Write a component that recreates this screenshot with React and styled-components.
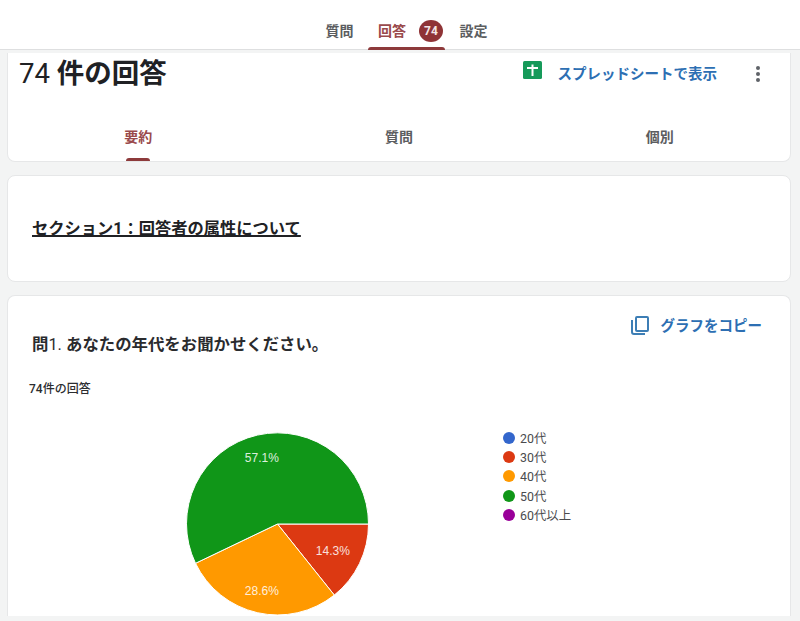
import React from 'react';
import styled, { createGlobalStyle } from 'styled-components';

const fontStack = '"Roboto", "Noto Sans CJK JP", "Liberation Sans", sans-serif';

const GlobalStyle = createGlobalStyle`
  html, body {
    margin: 0;
    padding: 0;
    background: #f3f4f4;
    font-family: ${fontStack};
  }
`;

const Page = styled.div`
  width: 800px;
  height: 621px;
  overflow: hidden;
  display: flex;
  flex-direction: column;
`;

const TopBar = styled.header`
  flex: none;
  height: 50px;
  box-sizing: border-box;
  background: #fff;
  border-bottom: 1px solid #dedfe0;
  display: flex;
  justify-content: center;
  padding-left: 13px;
  gap: 14.5px;
`;

const TopTab = styled.div`
  position: relative;
  display: flex;
  align-items: center;
  gap: 13px;
  height: 50px;
  padding: 9px ${(p) => (p.$active ? '2px' : '0')} 0 ${(p) => (p.$active ? '10px' : '0')};
  box-sizing: border-box;
  font-size: 14px;
  font-weight: 700;
  color: ${(p) => (p.$active ? '#9a4a4c' : '#5b5d60')};
`;

const TopUnderline = styled.span`
  position: absolute;
  left: 0;
  right: 0;
  bottom: 0;
  height: 3px;
  border-radius: 3px 3px 0 0;
  background: #8d3a3b;
`;

const Badge = styled.span`
  width: 24px;
  height: 22px;
  margin-top: 3px;
  border-radius: 50%;
  background: #8f3336;
  color: #f4e6e6;
  font-size: 12px;
  font-weight: 700;
  display: flex;
  align-items: center;
  justify-content: center;
`;

const Content = styled.main`
  flex: 1;
  min-height: 0;
  display: flex;
  flex-direction: column;
  padding: 0 9px 0 7px;
  gap: 13px;
`;

const Card = styled.section`
  flex: none;
  background: #fff;
  border: 1px solid #e6e7e8;
  border-radius: 8px;
  box-sizing: border-box;
`;

const SummaryCard = styled(Card)`
  height: 109px;
  margin-top: 3px;
  border-top: none;
  border-radius: 0 0 8px 8px;
  display: flex;
  flex-direction: column;
`;

const SummaryHead = styled.div`
  display: flex;
  align-items: center;
  height: 36px;
  padding: 0 29px 0 11px;
`;

const Title = styled.h1`
  margin: 0;
  font-size: 27.5px;
  font-weight: 700;
  color: #202124;
  flex: 1;
`;

const Numeral = styled.span`
  font-weight: 400;
`;

const SheetLink = styled.a`
  display: flex;
  align-items: center;
  font-size: 14.5px;
  font-weight: 700;
  color: #2d6fb3;
  gap: 16px;
  margin: 2px 38px 0 0;
`;

const MoreSvg = styled.svg`
  margin-top: 6px;
`;

const Tabs = styled.nav`
  display: grid;
  grid-template-columns: repeat(3, 1fr);
  margin-top: 22px;
  flex: 1;
`;

const Tab = styled.div`
  position: relative;
  display: flex;
  justify-content: center;
  padding-top: 15px;
  font-size: 14px;
  font-weight: 700;
  color: ${(p) => (p.$active ? '#9a4a4c' : '#5b5d60')};
`;

const TabUnderline = styled.span`
  position: absolute;
  left: calc(50% - 12px);
  bottom: 0;
  width: 24px;
  height: 3px;
  border-radius: 3px 3px 0 0;
  background: #8d3a3b;
`;

const SectionCard = styled(Card)`
  height: 107px;
  padding: 39px 24px 0;
`;

const SectionTitle = styled.h2`
  margin: 0;
  font-size: 16.25px;
  font-weight: 700;
  color: #202124;
  text-decoration: underline;
  text-decoration-thickness: 2px;
`;

const ChartCard = styled(Card)`
  height: 321px;
  padding: 18px 28px 0 24px;
  border-radius: 8px 8px 0 0;
  border-bottom: none;
`;

const ChartHead = styled.div`
  display: flex;
  justify-content: space-between;
  align-items: flex-start;
`;

const Question = styled.h3`
  margin: 17px 0 0;
  font-size: 16.4px;
  font-weight: 700;
  color: #2a2b2e;
`;

const CopyLink = styled.a`
  display: flex;
  align-items: center;
  gap: 11px;
  font-size: 14.5px;
  font-weight: 700;
  color: #2d6fb3;
`;

const ResponseCount = styled.div`
  margin: 24px 0 0 -3px;
  font-size: 12px;
  font-weight: 500;
  color: #2c2d30;
`;

const ChartRow = styled.div`
  display: flex;
  align-items: flex-start;
  margin-top: 36px;
  padding-left: 153px;
`;

const Legend = styled.ul`
  list-style: none;
  margin: -4px 0 0 134px;
  padding: 0;
  display: flex;
  flex-direction: column;
`;

const LegendItem = styled.li`
  display: flex;
  align-items: center;
  gap: 5px;
  height: 19.4px;
  font-size: 12.4px;
  color: #4a4b4e;
`;

const Dot = styled.span`
  width: 12px;
  height: 12px;
  border-radius: 50%;
  background: ${(p) => p.$color};
`;

const PieLabel = styled.text`
  fill: #fff;
  font-size: 12px;
  font-family: "Liberation Sans", sans-serif;
  text-anchor: middle;
  opacity: 0.85;
`;

const legend = [
  { label: '20代', color: '#3366cc' },
  { label: '30代', color: '#dc3912' },
  { label: '40代', color: '#ff9900' },
  { label: '50代', color: '#109618' },
  { label: '60代以上', color: '#990099' },
];

const SheetsIcon = () => (
  <svg width="19" height="22" viewBox="0 0 19 22">
    <rect width="19" height="18" rx="1.5" fill="#169a5a" />
    <path d="M4 6h4.5V3.5h2V6H15v2h-4.5v7h-2V8H4z" fill="#fff" />
  </svg>
);

const MoreIcon = () => (
  <MoreSvg width="6" height="18" viewBox="0 0 6 18">
    <circle cx="3" cy="3" r="2" fill="#5f6368" />
    <circle cx="3" cy="9" r="2" fill="#5f6368" />
    <circle cx="3" cy="15" r="2" fill="#5f6368" />
  </MoreSvg>
);

const CopyIcon = () => (
  <svg width="20" height="20" viewBox="0 0 20 20" fill="none" stroke="#3d7eb5" strokeWidth="2">
    <rect x="6" y="2" width="12" height="14" rx="1" />
    <path d="M2 5v12a2 2 0 0 0 2 2h11" />
  </svg>
);

const PieChart = () => (
  <svg width="184" height="184" viewBox="0 0 184 184">
    <path d="M92.5 92L183.5 92A91 91 0 0 1 149.3 163.1Z" fill="#dc3912" stroke="#fff" />
    <path d="M92.5 92L149.3 163.1A91 91 0 0 1 10.5 131.3Z" fill="#ff9900" stroke="#fff" />
    <path d="M92.5 92L10.5 131.3A91 91 0 1 1 183.5 92Z" fill="#109618" stroke="#fff" />
    <PieLabel x="76.8" y="30">57.1%</PieLabel>
    <PieLabel x="147.8" y="123">14.3%</PieLabel>
    <PieLabel x="76.8" y="163">28.6%</PieLabel>
  </svg>
);

export default function App() {
  return (
    <Page>
      <GlobalStyle />
      <TopBar>
        <TopTab>質問</TopTab>
        <TopTab $active>
          回答
          <Badge>74</Badge>
          <TopUnderline />
        </TopTab>
        <TopTab>設定</TopTab>
      </TopBar>
      <Content>
        <SummaryCard>
          <SummaryHead>
            <Title>
              <Numeral>74</Numeral>
              {' 件の回答'}
            </Title>
            <SheetLink>
              <SheetsIcon />
              スプレッドシートで表示
            </SheetLink>
            <MoreIcon />
          </SummaryHead>
          <Tabs>
            <Tab $active>
              要約
              <TabUnderline />
            </Tab>
            <Tab>質問</Tab>
            <Tab>個別</Tab>
          </Tabs>
        </SummaryCard>
        <SectionCard>
          <SectionTitle>セクション1：回答者の属性について</SectionTitle>
        </SectionCard>
        <ChartCard>
          <ChartHead>
            <Question>
              問
              <Numeral>1.</Numeral>
              {' あなたの年代をお聞かせください。'}
            </Question>
            <CopyLink>
              <CopyIcon />
              グラフをコピー
            </CopyLink>
          </ChartHead>
          <ResponseCount>74件の回答</ResponseCount>
          <ChartRow>
            <PieChart />
            <Legend>
              {legend.map((item) => (
                <LegendItem key={item.label}>
                  <Dot $color={item.color} />
                  {item.label}
                </LegendItem>
              ))}
            </Legend>
          </ChartRow>
        </ChartCard>
      </Content>
    </Page>
  );
}
